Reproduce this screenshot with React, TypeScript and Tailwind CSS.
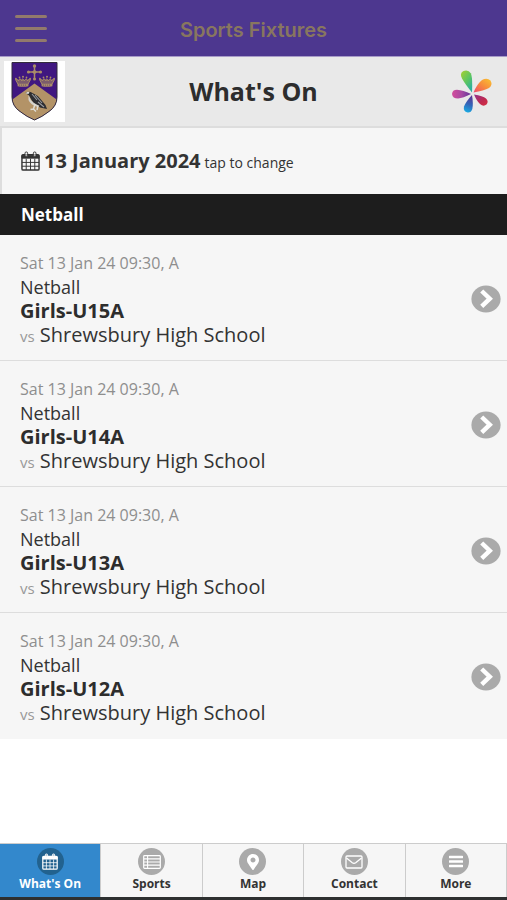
import type { ReactNode } from "react";
import { FaMapMarkerAlt } from "react-icons/fa";

const fixtures = [
  { id: 1, date: "Sat 13 Jan 24 09:30, A", sport: "Netball", team: "Girls-U15A", opponent: "Shrewsbury High School" },
  { id: 2, date: "Sat 13 Jan 24 09:30, A", sport: "Netball", team: "Girls-U14A", opponent: "Shrewsbury High School" },
  { id: 3, date: "Sat 13 Jan 24 09:30, A", sport: "Netball", team: "Girls-U13A", opponent: "Shrewsbury High School" },
  { id: 4, date: "Sat 13 Jan 24 09:30, A", sport: "Netball", team: "Girls-U12A", opponent: "Shrewsbury High School" },
];

function CalendarIcon({ className }: { className?: string }) {
  return (
    <svg viewBox="0 0 20 21" className={className} fill="none" stroke="currentColor" aria-hidden="true">
      <rect x="1" y="4" width="18" height="16" rx="1.2" strokeWidth="1.5" />
      <path d="M1 4.5h18v3H1z" fill="currentColor" strokeWidth="1" />
      <path d="M5.5 8v12M10 8v12M14.5 8v12M1 12h18M1 16h18" strokeWidth="1" />
      <rect x="4.2" y="1" width="2.8" height="5" rx="1.3" fill="#f5f5f5" fillOpacity="0.6" strokeWidth="1" />
      <rect x="13" y="1" width="2.8" height="5" rx="1.3" fill="#f5f5f5" fillOpacity="0.6" strokeWidth="1" />
    </svg>
  );
}

function ListIcon() {
  return (
    <svg viewBox="0 0 18 14" className="h-3.5 w-[18px]" fill="none" stroke="currentColor" aria-hidden="true">
      <rect x="0.7" y="0.7" width="16.6" height="12.6" rx="0.8" strokeWidth="1.2" />
      <path d="M1 3.9h16M1 7h16M1 10.1h16M4.6 1v12" strokeWidth="1.1" />
    </svg>
  );
}

function EnvelopeIcon() {
  return (
    <svg viewBox="0 0 18 14" className="h-3.5 w-[18px]" fill="none" stroke="currentColor" aria-hidden="true">
      <rect x="1" y="1" width="16" height="12" rx="1" strokeWidth="1.3" />
      <path d="M1.5 3l5.8 4.8q1.7 1.2 3.4 0L16.5 3" strokeWidth="1.3" />
    </svg>
  );
}

function BarsIcon() {
  return (
    <svg viewBox="0 0 14 13" className="h-[13px] w-3.5" stroke="currentColor" aria-hidden="true">
      <path d="M0.8 2h12.4M0.8 6.5h12.4M0.8 11h12.4" strokeWidth="2.4" strokeLinecap="round" />
    </svg>
  );
}

function Crown({ x }: { x: number }) {
  return (
    <g transform={`translate(${x} 14)`} fill="#a98d67">
      <path d="M0.5 4.5Q2 3 3.5 6Q4.5 1.5 7 6Q7.2 1.5 9.2 6Q11.7 1.5 12.5 6Q14 3 15.5 4.5L12.8 9.5H3.2z" fill="#7c5c6c" stroke="#a98d67" strokeWidth="1" />
      <path d="M2.6 8.8h10.8v2.4q-5.4 1.2-10.8 0z" />
      <circle cx="0.9" cy="3.6" r="0.9" />
      <circle cx="4.5" cy="2.3" r="0.9" />
      <circle cx="8" cy="1.7" r="1" />
      <circle cx="11.5" cy="2.3" r="0.9" />
      <circle cx="15.1" cy="3.6" r="0.9" />
      <path d="M4 10.1h8" stroke="#4a2a70" strokeWidth="0.6" strokeDasharray="1 1" />
    </g>
  );
}

function SchoolCrest() {
  return (
    <svg viewBox="0 0 61 61" className="size-[61px] bg-white" role="img" aria-label="School crest">
      <clipPath id="shield">
        <path d="M8 1.5h45V36q0 9-8 14.5-7 5.5-14.5 8.5Q23 56 16 50.5 8 45 8 36z" />
      </clipPath>
      <g clipPath="url(#shield)">
        <path d="M0 0h61v61H0z" fill="#401780" />
        <path d="M30.500 22.500L56 41v20H5V41z" fill="#b39367" />
      </g>
      <path d="M8 1.5h45V36q0 9-8 14.5-7 5.5-14.5 8.5Q23 56 16 50.5 8 45 8 36z" fill="none" stroke="#332b3d" strokeWidth="1" />
      <Crown x={11} />
      <Crown x={35} />
      <path d="M30.5 5v14M24 11h13" stroke="#a98d67" strokeWidth="1.5" />
      <g fill="#a98d67">
        <circle cx="30.5" cy="5" r="1.7" />
        <circle cx="30.5" cy="18" r="1.5" />
        <circle cx="24.5" cy="11" r="1.6" />
        <circle cx="36.5" cy="11" r="1.6" />
        <path d="M30.5 8.5l2.5 2.5-2.5 2.5L28 11z" />
      </g>
      <path d="M21.500 32q3-2.500 7 0 5 2 8 6l5 6 1.500 4-7-1.500-7-5-4-7z" fill="#2d2d31" />
      <path d="M24.500 34q1.500 5 5.500 8l5.500 3-2 1q-7-2-9-7z" fill="#d4d2cd" />
      <path d="M28 33l5 6M31 34l7 8M34 41l6 5" stroke="#9a9ca0" strokeWidth="1.100" />
      <path d="M21.500 32.500q1.500-2.500 4-1.500l-1 2z" fill="#dedbd4" />
      <path d="M31 43l-1.500 5-3 .5m3-.5l2.500 2.500m2-6l-1 4.500" fill="none" stroke="#dedbd4" strokeWidth="1.500" />
    </svg>
  );
}

function PetalLogo() {
  return (
    <svg viewBox="0 0 42 44" className="h-11 w-[42px]" role="img" aria-label="Sports portal">
      <defs>
        <linearGradient id="green" x1="0" y1="0" x2="0.7" y2="1">
          <stop offset="0" stopColor="#a8d030" />
          <stop offset="0.6" stopColor="#58c465" />
          <stop offset="1" stopColor="#29afa0" />
        </linearGradient>
        <linearGradient id="orange" x1="1" y1="0" x2="0" y2="1">
          <stop offset="0" stopColor="#fac331" />
          <stop offset="0.5" stopColor="#f78a3d" />
          <stop offset="1" stopColor="#ee4870" />
        </linearGradient>
        <linearGradient id="red" x1="0" y1="0" x2="1" y2="1">
          <stop offset="0" stopColor="#92348f" />
          <stop offset="0.6" stopColor="#bf294f" />
          <stop offset="1" stopColor="#d52f42" />
        </linearGradient>
        <linearGradient id="blue" x1="0.5" y1="0" x2="0.3" y2="1">
          <stop offset="0" stopColor="#5b3594" />
          <stop offset="0.5" stopColor="#3265b8" />
          <stop offset="1" stopColor="#19aee5" />
        </linearGradient>
        <linearGradient id="pink" x1="0" y1="0" x2="1" y2="0">
          <stop offset="0" stopColor="#d34c9b" />
          <stop offset="0.5" stopColor="#a84aa3" />
          <stop offset="1" stopColor="#63379a" />
        </linearGradient>
      </defs>
      <path d="M21 22.5Q14 14 11 8.5 8.5 3.500 12 1.200 17 -1 19.800 3.200 21.700 7 21 22.500z" fill="url(#green)" />
      <path d="M22.500 22.500Q26 14 31 10 36 7.500 39.500 10.500 42 15 38 18 33 20.500 22.500 22.500z" fill="url(#orange)" />
      <path d="M23 24.500Q32 26 35 28.500 38 31.500 35.500 34.500 32.500 37 29 34 26 31.500 23 24.500z" fill="url(#red)" />
      <path d="M21 25Q22.500 34 21.300 39 20 43 16.500 42.500 12 41.500 13 36.500 15 31.500 21 25z" fill="url(#blue)" />
      <path d="M20 24Q12 28 7 28.600 1.500 28.500 1 24 1.300 19.800 6 19.700 12 20 20 24z" fill="url(#pink)" />
    </svg>
  );
}

function ChevronBadge() {
  return (
    <svg viewBox="0 0 30 28" className="h-7 w-[30px] shrink-0" aria-hidden="true">
      <ellipse cx="15" cy="14" rx="14.600" ry="13.500" fill="#aaa" />
      <path d="M12.300 7.500l6.500 6.200-6.500 6.200" fill="none" stroke="#fff" strokeWidth="4.400" strokeLinecap="square" strokeLinejoin="miter" />
    </svg>
  );
}

const tabs: { label: string; icon: ReactNode; active?: boolean }[] = [
  { label: "What's On", icon: <CalendarIcon className="h-[17px] w-4" />, active: true },
  { label: "Sports", icon: <ListIcon /> },
  { label: "Map", icon: <FaMapMarkerAlt className="h-4 w-3" /> },
  { label: "Contact", icon: <EnvelopeIcon /> },
  { label: "More", icon: <BarsIcon /> },
];

export default function App() {
  return (
    <div className="flex min-h-screen flex-col bg-white font-['Open_Sans',sans-serif] text-[#333]">
      <header className="grid h-[57px] grid-cols-[64px_1fr_64px] items-center border-b border-[#a79bc8] bg-[#4d378f]">
        <button type="button" aria-label="Open menu" className="flex flex-col gap-[9px] pl-[15px]">
          <span className="h-[3px] w-8 rounded-full bg-[#927a6c]" />
          <span className="h-[3px] w-8 rounded-full bg-[#927a6c]" />
          <span className="h-[3px] w-8 rounded-full bg-[#927a6c]" />
        </button>
        <div className="pt-1 text-center font-['Inter',sans-serif] text-xl font-semibold text-[#88765f]">
          Sports Fixtures
        </div>
      </header>

      <div className="grid grid-cols-[1fr_auto_1fr] items-center border-b border-[#ddd] bg-[#e9e9e9] py-1 pr-3.5 pl-1">
        <SchoolCrest />
        <h1 className="pl-2.5 text-[25px] font-bold text-[#2d2d2d]">What's On</h1>
        <div className="flex justify-end">
          <PetalLogo />
        </div>
      </div>

      <main>
        <button
          type="button"
          className="flex h-[67px] w-full items-center border-t border-l-2 border-[#ddd] bg-[#f6f6f6] pl-[19px] text-left"
        >
          <CalendarIcon className="h-5 w-[19px]" />
          <span className="ml-1 flex items-baseline gap-1">
            <span className="text-xl font-bold">13 January 2024</span>
            <span className="text-sm">tap to change</span>
          </span>
        </button>

        <h2 className="bg-[#1d1d1d] px-[21px] py-2 text-[17px] leading-[25px] font-bold text-white">Netball</h2>

        <ul>
          {fixtures.map((fixture) => (
            <li key={fixture.id} className="border-b border-[#ddd] last:border-[#f6f6f6]">
              <a href={`#fixture-${fixture.id}`} className="flex items-center justify-between bg-[#f6f6f6] pt-4 pr-[6px] pb-[13px] pl-5">
                <div>
                  <p className="text-base leading-6 text-[#8e8e8e]">{fixture.date}</p>
                  <p className="text-lg leading-6">{fixture.sport}</p>
                  <p className="text-xl leading-6 font-bold text-[#2d2d2d]">{fixture.team}</p>
                  <p className="text-xl leading-6">
                    <span className="text-[15px] leading-none text-[#999]">vs</span> {fixture.opponent}
                  </p>
                </div>
                <ChevronBadge />
              </a>
            </li>
          ))}
        </ul>
      </main>

      <nav className="mt-auto grid grid-cols-5 border-t border-b-[3px] border-t-[#ccc] border-b-[#2e3030] bg-[#f6f6f6]">
        {tabs.map(({ label, icon, active }) => (
          <a
            key={label}
            href="#"
            aria-current={active ? "page" : undefined}
            className={`flex flex-col items-center border-r border-[#ccc] pt-1 pb-1 ${active ? "bg-[#3388cc] text-white" : ""}`}
          >
            <span className={`flex size-[27px] items-center justify-center rounded-full text-white ${active ? "bg-[#22628f]" : "bg-[#aaa]"}`}>
              {icon}
            </span>
            <span className="text-xs leading-[18px] font-bold">{label}</span>
          </a>
        ))}
      </nav>
    </div>
  );
}
